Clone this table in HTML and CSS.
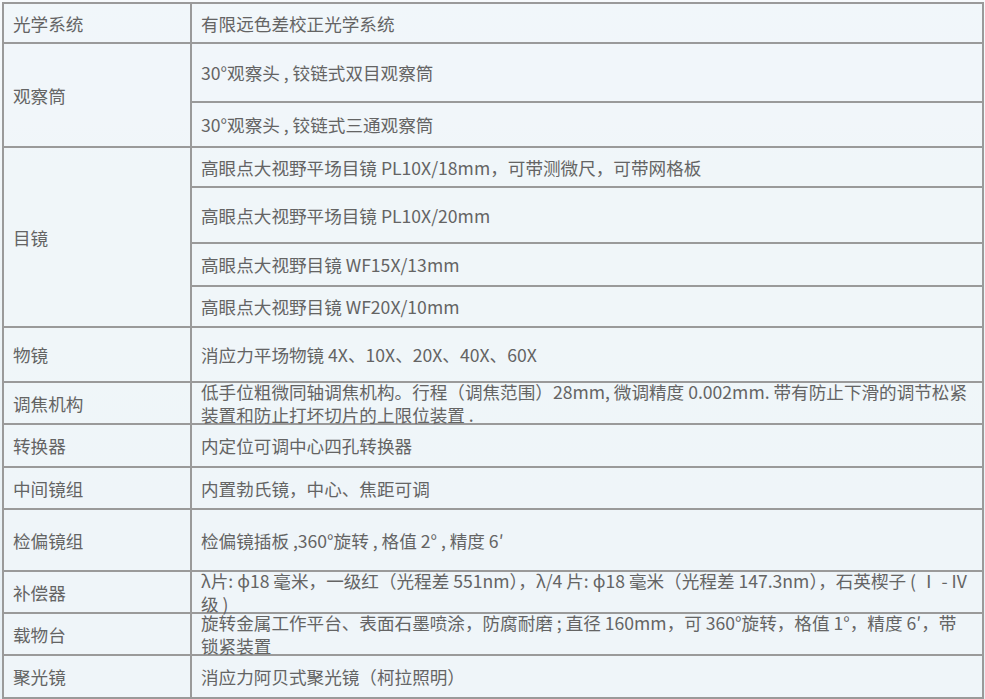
FILE: index.html
```html
<!DOCTYPE html>
<html lang="zh-CN">
<head>
<meta charset="utf-8">
<title>参数</title>
<link rel="stylesheet" href="styles.css">
</head>
<body>
<div class="page">
<table class="spec">
<colgroup><col class="c1"><col class="c2"></colgroup>
<tbody>
<tr class="h40"><td>光学系统</td><td>有限远色差校正光学系统</td></tr>
<tr class="h59"><td rowspan="2">观察筒</td><td>30°观察头 , 铰链式双目观察筒</td></tr>
<tr class="h45"><td>30°观察头 , 铰链式三通观察筒</td></tr>
<tr class="h40"><td rowspan="4">目镜</td><td>高眼点大视野平场目镜 PL10X/18mm，可带测微尺，可带网格板</td></tr>
<tr class="h56"><td>高眼点大视野平场目镜 PL10X/20mm</td></tr>
<tr class="h43"><td>高眼点大视野目镜 WF15X/13mm</td></tr>
<tr class="h41"><td>高眼点大视野目镜 WF20X/10mm</td></tr>
<tr class="h55"><td>物镜</td><td>消应力平场物镜 4X、10X、20X、40X、60X</td></tr>
<tr class="h41"><td>调焦机构</td><td><div class="ml">低手位粗微同轴调焦机构。行程（调焦范围）28mm, 微调精度 0.002mm. 带有防止下滑的调节松紧<br>装置和防止打坏切片的上限位装置 .</div></td></tr>
<tr class="h43"><td>转换器</td><td>内定位可调中心四孔转换器</td></tr>
<tr class="h42"><td>中间镜组</td><td>内置勃氏镜，中心、焦距可调</td></tr>
<tr class="h62"><td>检偏镜组</td><td>检偏镜插板 ,360°旋转 , 格值 2° , 精度 6′</td></tr>
<tr class="h42"><td>补偿器</td><td><div class="ml">λ片: ϕ18 毫米，一级红（光程差 551nm），λ/4 片: ϕ18 毫米（光程差 147.3nm），石英楔子 ( Ⅰ - IV<br>级 )</div></td></tr>
<tr class="h42"><td>载物台</td><td><div class="ml">旋转金属工作平台、表面石墨喷涂，防腐耐磨 ; 直径 160mm，可 360°旋转，格值 1°，精度 6′，带<br>锁紧装置</div></td></tr>
<tr class="h43"><td>聚光镜</td><td>消应力阿贝式聚光镜（柯拉照明）</td></tr>
<tr class="h43"><td>&nbsp;</td><td>&nbsp;</td></tr>
</tbody>
</table>
</div>
</body>
</html>
```

FILE: styles.css
```css
html, body {
  margin: 0;
  padding: 0;
  background: #ffffff;
}
.page {
  padding: 2px 0 0 2px;
  height: 699px;
  overflow: hidden;
  box-sizing: border-box;
  background: linear-gradient(180deg, #f7fafc 0%, #eef4f7 40%, #e8f0f5 100%);
}
.spec {
  border-collapse: collapse;
  width: 982px;
  table-layout: fixed;
  font-family: "Noto Sans CJK SC", "Noto Sans", sans-serif;
  font-size: 17.6px;
  line-height: 21px;
  color: #646464;
  background: rgba(240, 246, 249, 0.85);
}
.c1 { width: 188px; }
.spec td {
  border: 2px solid #9a9a9a;
  padding: 0 3px 0 9px;
  vertical-align: middle;
  white-space: nowrap;
}
.ml {
  height: 40px;
  line-height: 23px;
  margin: -3px 0 3px;
}
.h40 { height: 40px; }
.h41 { height: 41px; }
.h42 { height: 42px; }
.h43 { height: 43px; }
.h45 { height: 45px; }
.h55 { height: 55px; }
.h56 { height: 56px; }
.h59 { height: 59px; }
.h62 { height: 62px; }
```
